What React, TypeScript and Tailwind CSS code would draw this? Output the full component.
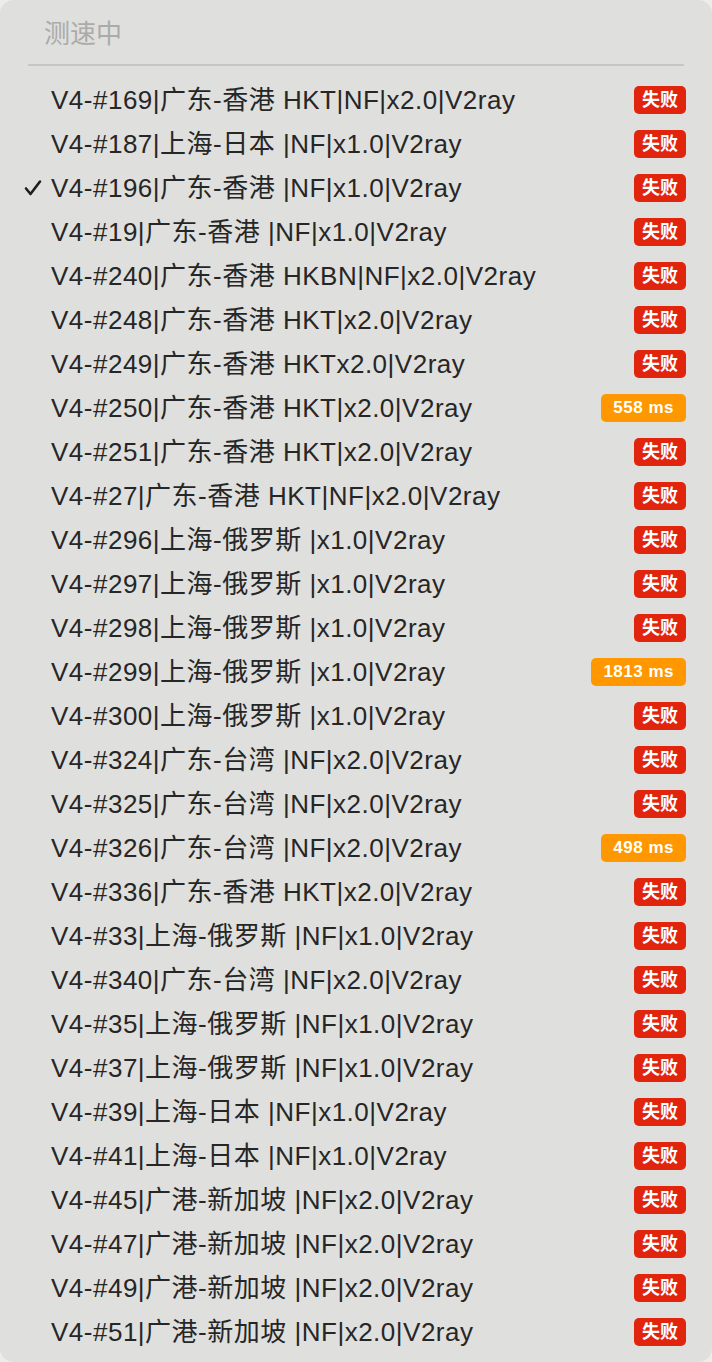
import React from "react";

type Row = { name: string; status: string; checked?: boolean };

const rows: Row[] = [
  { name: "V4-#169|广东-香港 HKT|NF|x2.0|V2ray", status: "失败" },
  { name: "V4-#187|上海-日本 |NF|x1.0|V2ray", status: "失败" },
  { name: "V4-#196|广东-香港 |NF|x1.0|V2ray", status: "失败", checked: true },
  { name: "V4-#19|广东-香港 |NF|x1.0|V2ray", status: "失败" },
  { name: "V4-#240|广东-香港 HKBN|NF|x2.0|V2ray", status: "失败" },
  { name: "V4-#248|广东-香港 HKT|x2.0|V2ray", status: "失败" },
  { name: "V4-#249|广东-香港 HKTx2.0|V2ray", status: "失败" },
  { name: "V4-#250|广东-香港 HKT|x2.0|V2ray", status: "558 ms" },
  { name: "V4-#251|广东-香港 HKT|x2.0|V2ray", status: "失败" },
  { name: "V4-#27|广东-香港 HKT|NF|x2.0|V2ray", status: "失败" },
  { name: "V4-#296|上海-俄罗斯 |x1.0|V2ray", status: "失败" },
  { name: "V4-#297|上海-俄罗斯 |x1.0|V2ray", status: "失败" },
  { name: "V4-#298|上海-俄罗斯 |x1.0|V2ray", status: "失败" },
  { name: "V4-#299|上海-俄罗斯 |x1.0|V2ray", status: "1813 ms" },
  { name: "V4-#300|上海-俄罗斯 |x1.0|V2ray", status: "失败" },
  { name: "V4-#324|广东-台湾 |NF|x2.0|V2ray", status: "失败" },
  { name: "V4-#325|广东-台湾 |NF|x2.0|V2ray", status: "失败" },
  { name: "V4-#326|广东-台湾 |NF|x2.0|V2ray", status: "498 ms" },
  { name: "V4-#336|广东-香港 HKT|x2.0|V2ray", status: "失败" },
  { name: "V4-#33|上海-俄罗斯 |NF|x1.0|V2ray", status: "失败" },
  { name: "V4-#340|广东-台湾 |NF|x2.0|V2ray", status: "失败" },
  { name: "V4-#35|上海-俄罗斯 |NF|x1.0|V2ray", status: "失败" },
  { name: "V4-#37|上海-俄罗斯 |NF|x1.0|V2ray", status: "失败" },
  { name: "V4-#39|上海-日本 |NF|x1.0|V2ray", status: "失败" },
  { name: "V4-#41|上海-日本 |NF|x1.0|V2ray", status: "失败" },
  { name: "V4-#45|广港-新加坡 |NF|x2.0|V2ray", status: "失败" },
  { name: "V4-#47|广港-新加坡 |NF|x2.0|V2ray", status: "失败" },
  { name: "V4-#49|广港-新加坡 |NF|x2.0|V2ray", status: "失败" },
  { name: "V4-#51|广港-新加坡 |NF|x2.0|V2ray", status: "失败" },
];

function Check() {
  return (
    <svg width="18" height="18" viewBox="0 0 18 18" className="block">
      <polyline
        points="2,9.5 6.5,15 16,2.5"
        fill="none"
        stroke="#1f1f1f"
        strokeWidth="2.6"
        strokeLinecap="round"
        strokeLinejoin="round"
      />
    </svg>
  );
}

export default function App() {
  return (
    <div className="h-[1362px] w-[712px] bg-[#ececec]">
      <div
        className="h-full w-full rounded-[14px] bg-[#dfdfdd] overflow-hidden"
        style={{ fontFamily: '"Liberation Sans", "Noto Sans CJK SC", sans-serif' }}
      >
        <div className="pl-[44px] pt-[15px] h-[64px] text-[26px] leading-[38px] text-[#ababab]">
          测速中
        </div>
        <div className="mx-[28px] h-[2px] bg-[#c6c6c4]" />
        <div className="pt-[12px]">
          {rows.map((r, i) => {
            const ok = r.status.endsWith("ms");
            return (
              <div key={i} className="flex h-[44px] items-center pr-[26px]">
                <div className="w-[51px] flex justify-end pr-[9px]">
                  {r.checked ? <Check /> : null}
                </div>
                <div className="flex-1 text-[26px] leading-[30px] tracking-[0.5px] text-[#262626] whitespace-nowrap">
                  {r.name}
                </div>
                <div
                  className={
                    ok
                      ? "h-[28px] rounded-[5px] bg-[#ff9800] px-[12px] flex items-center text-[17px] font-bold tracking-[0.5px] text-white"
                      : "h-[28px] rounded-[5px] bg-[#e1250d] px-[8px] flex items-center text-[18px] font-bold text-white"
                  }
                >
                  {r.status}
                </div>
              </div>
            );
          })}
        </div>
      </div>
    </div>
  );
}
